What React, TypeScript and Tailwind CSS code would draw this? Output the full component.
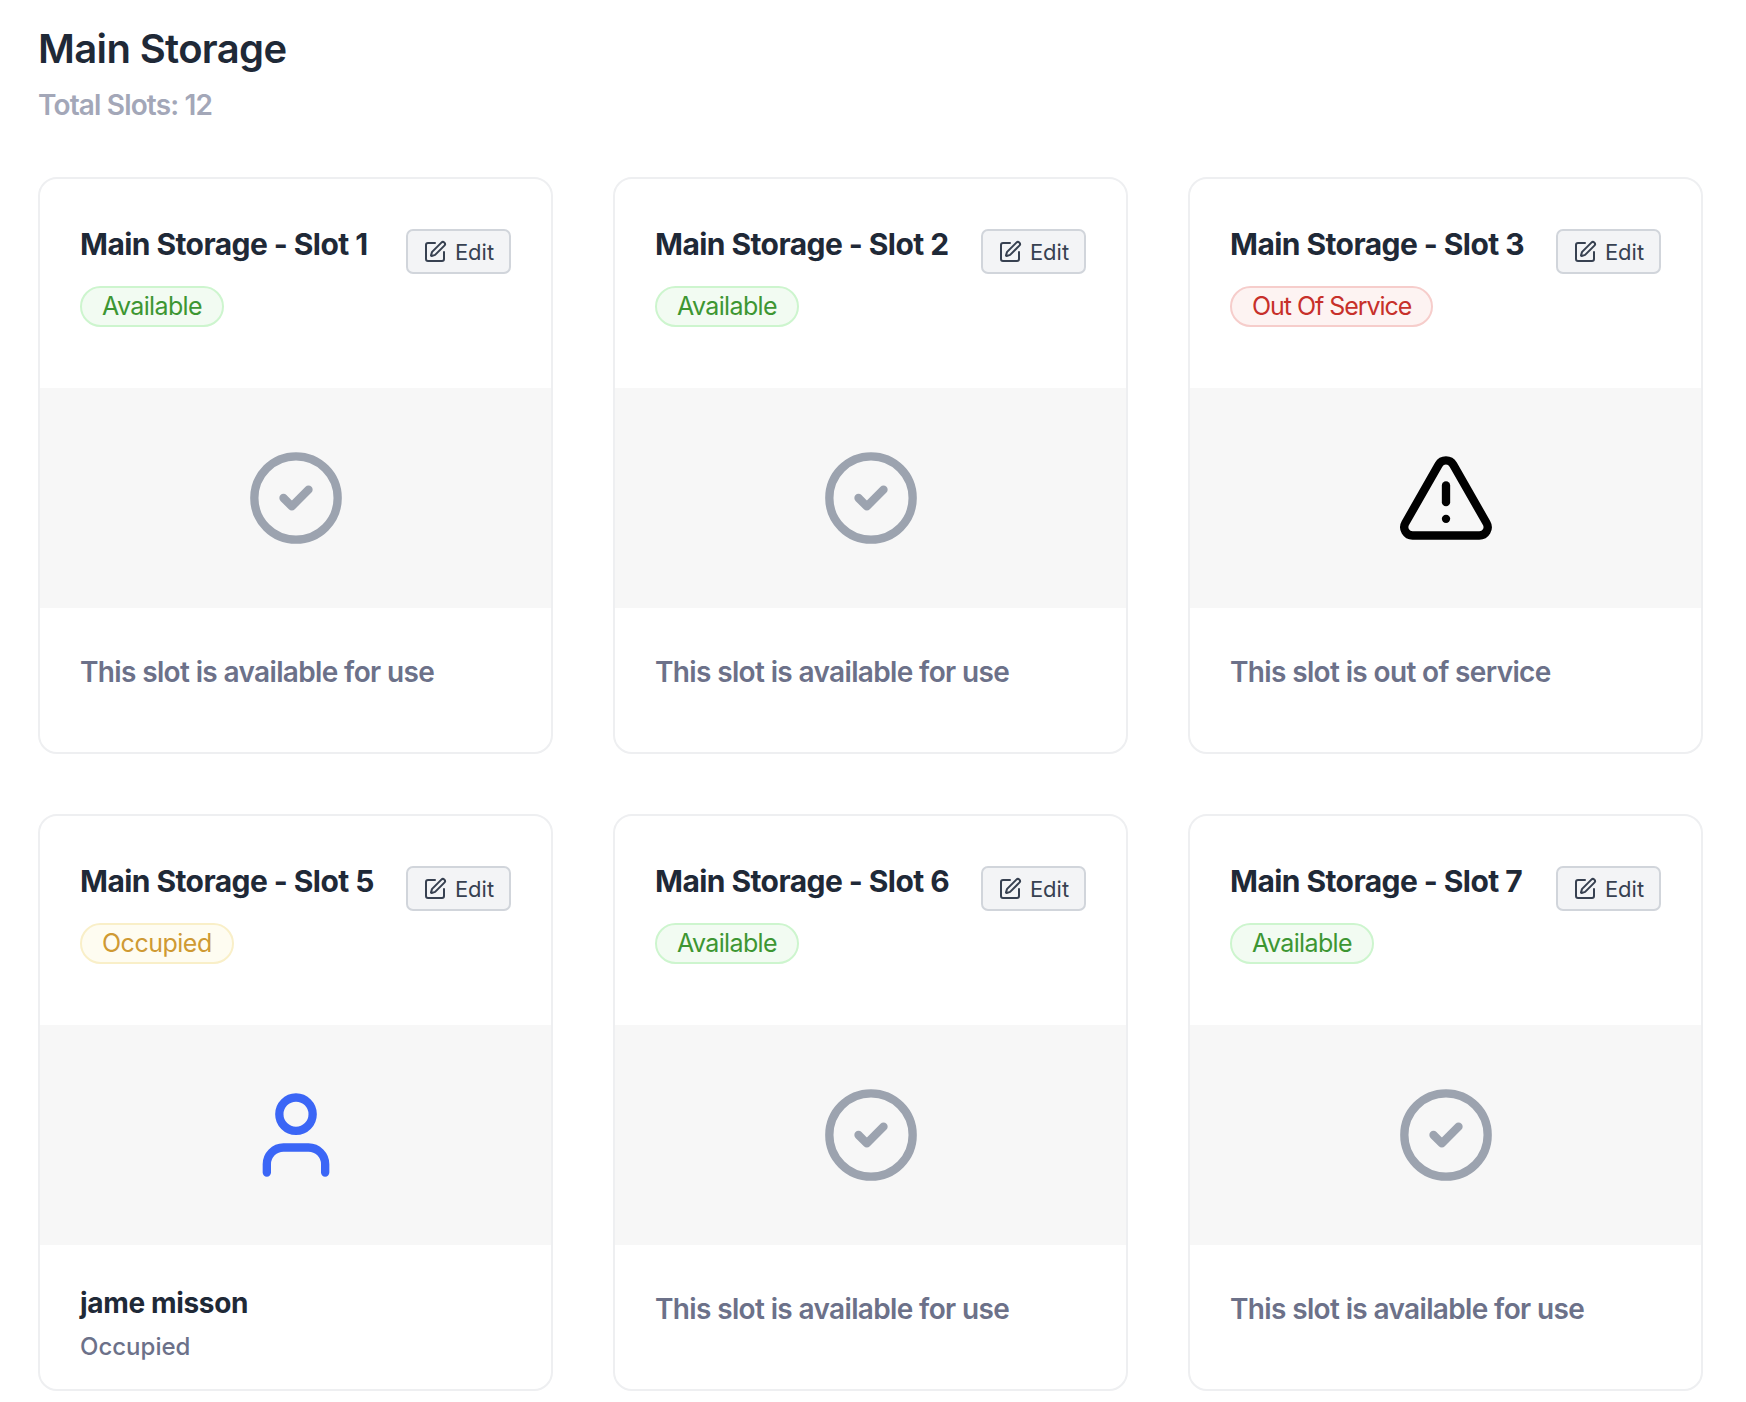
import { CircleCheck, SquarePen, TriangleAlert, User } from "lucide-react";

type Status = "available" | "occupied" | "out";

interface Slot {
  id: number;
  status: Status;
  note?: string;
  occupant?: string;
}

const slots: Slot[] = [
  { id: 1, status: "available", note: "This slot is available for use" },
  { id: 2, status: "available", note: "This slot is available for use" },
  { id: 3, status: "out", note: "This slot is out of service" },
  { id: 5, status: "occupied", occupant: "jame misson" },
  { id: 6, status: "available", note: "This slot is available for use" },
  { id: 7, status: "available", note: "This slot is available for use" },
];

const badges = {
  available: { label: "Available", cls: "border-[#cdf5ce] bg-[#f2fbf2] text-[#3d9632] tracking-[-0.025em]" },
  occupied: { label: "Occupied", cls: "border-[#f9efc8] bg-[#fefcf1] text-[#cf9a33] tracking-[-0.02em]" },
  out: { label: "Out Of Service", cls: "border-[#f6cdcb] bg-[#fdf3f2] text-[#c7302a] tracking-[-0.042em]" },
};

function SlotIcon({ status }: { status: Status }) {
  if (status === "out") return <TriangleAlert size={100} className="text-black" />;
  if (status === "occupied") return <User size={100} className="text-[#3b66f6]" />;
  return <CircleCheck size={100} className="text-[#9ca3af]" />;
}

function SlotCard({ slot }: { slot: Slot }) {
  const badge = badges[slot.status];
  return (
    <div className="h-[577px] overflow-hidden rounded-[19px] border-2 border-[#eeeff1] bg-white">
      <div className="h-[209px] px-10 pt-[42px]">
        <div className="flex items-start justify-between">
          <h3 className="text-[30px] leading-[46px] font-bold tracking-[-0.019em] text-[#1f2937]">
            Main Storage - Slot {slot.id}
          </h3>
          <button className="mt-[8px] flex h-[45px] w-[105px] items-center justify-center gap-2 rounded-[7px] border-2 border-[#d1d5db] bg-[#f3f4f6] text-[22px] text-[#374151]">
            <SquarePen size={24} />
            <span className="pt-[2px]">Edit</span>
          </button>
        </div>
        <span className={`mt-[12px] inline-block h-[41px] rounded-full border-2 px-5 text-[25px] leading-[37px] ${badge.cls}`}>
          {badge.label}
        </span>
      </div>
      <div className="flex h-[220px] items-center justify-center bg-[#f7f7f7]">
        <SlotIcon status={slot.status} />
      </div>
      {slot.occupant ? (
        <div className="px-10 pt-[39px]">
          <p className="text-[28px] leading-[38px] font-bold tracking-[-0.012em] text-[#1f2937]">{slot.occupant}</p>
          <p className="mt-[7px] text-[24px] leading-[36px] font-medium text-[#6c7189]">Occupied</p>
        </div>
      ) : (
        <p className="px-10 pt-[44px] text-[28px] leading-[40px] font-semibold tracking-[-0.023em] text-[#6c7189]">
          {slot.note}
        </p>
      )}
    </div>
  );
}

export default function App() {
  return (
    <div className="min-h-[1402px] bg-white pl-[38px] pt-[21px] font-['Inter',sans-serif]">
      <h1 className="text-[40px] leading-[56px] font-semibold tracking-[-0.016em] text-[#1f2937]">Main Storage</h1>
      <p className="mt-[7px] text-[28px] leading-[42px] font-semibold tracking-[-0.03em] text-[#a3a7b8]">Total Slots: 12</p>
      <div className="mt-[51px] grid w-[1665px] grid-cols-3 gap-[60px]">
        {slots.map((slot) => (
          <SlotCard key={slot.id} slot={slot} />
        ))}
      </div>
    </div>
  );
}
